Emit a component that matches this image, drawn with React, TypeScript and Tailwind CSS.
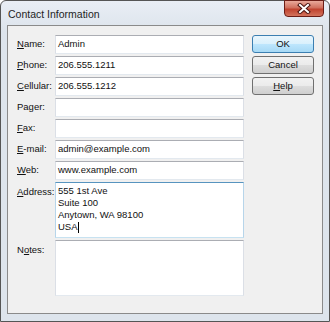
import React from 'react';

const font = { fontFamily: '"Liberation Sans", Arial, sans-serif' };

function Label({ pre = '', u = '', post = '' }: { pre?: string; u?: string; post?: string }) {
  return (
    <span>
      {pre}
      {u && <span className="underline underline-offset-[1px]">{u}</span>}
      {post}
    </span>
  );
}

const rows: { label: React.ReactNode; value: string }[] = [
  { label: <Label u="N" post="ame:" />, value: 'Admin' },
  { label: <Label u="P" post="hone:" />, value: '206.555.1211' },
  { label: <Label u="C" post="ellular:" />, value: '206.555.1212' },
  { label: <Label post="Pager:" />, value: '' },
  { label: <Label u="F" post="ax:" />, value: '' },
  { label: <Label u="E" post="-mail:" />, value: 'admin@example.com' },
  { label: <Label u="W" post="eb:" />, value: 'www.example.com' },
];

function Field({ value }: { value: string }) {
  return (
    <div className="h-[19px] flex-1 bg-white border border-t-[#abadb3] border-x-[#dbdfe6] border-b-[#e3e9ef] flex items-center pl-[2px]">
      {value}
    </div>
  );
}

function Button({ children, primary }: { children: React.ReactNode; primary?: boolean }) {
  return (
    <div
      className={`h-[18px] w-[62px] rounded-[3px] border flex items-center justify-center ${
        primary
          ? 'border-[#3c7fb1] bg-[linear-gradient(#eaf6fd_0%,#d9f0fc_50%,#bee6fd_50%,#a7d9f5_100%)]'
          : 'border-[#707070] bg-[linear-gradient(#f2f2f2_0%,#ebebeb_50%,#dddddd_50%,#cfcfcf_100%)]'
      }`}
    >
      {children}
    </div>
  );
}

export default function App() {
  return (
    <div
      className="w-[330px] h-[322px] rounded-t-[6px] border border-[#555] bg-[linear-gradient(#e9eef5,#dde4ec_30px,#dde4ec)] flex flex-col px-[6px] pb-[7px] text-[9.5px] text-[#111]"
      style={font}
    >
      <div className="h-[24px] flex items-start justify-between shrink-0">
        <span className="text-[10.5px] pl-[1px] mt-[6px] text-[#1e1e1e]">Contact Information</span>
        <div className="w-[40px] h-[17px] -mt-px mr-[-1px] rounded-b-[4px] border border-[#6b1d16] bg-[linear-gradient(#e9a99b,#d0705e_45%,#c0432f_55%,#d3735c)] flex items-center justify-center">
          <svg width="14" height="11" viewBox="0 0 14 11">
            <path d="M3 2 L11 9 M11 2 L3 9" stroke="#4a1410" strokeWidth="4" strokeLinecap="square" />
            <path d="M3 2 L11 9 M11 2 L3 9" stroke="#ffffff" strokeWidth="2" strokeLinecap="square" />
          </svg>
        </div>
      </div>
      <div className="flex-1 border border-[#8a8a8a] bg-[#f0f0f0] flex pt-[9px] pl-[9px] pr-[8px]">
        <div className="flex flex-col gap-[2px] w-[227px] shrink-0">
          {rows.map((r, i) => (
            <div key={i} className="flex items-center">
              <div className="w-[38px] shrink-0">{r.label}</div>
              <Field value={r.value} />
            </div>
          ))}
          <div className="flex items-start">
            <div className="w-[38px] shrink-0 pt-[3px]">
              <Label u="A" post="ddress:" />
            </div>
            <div className="h-[56px] flex-1 bg-white border border-t-[#5794bf] border-x-[#b7d5ea] border-b-[#c7e2f1] pl-[2px] pt-[2px] leading-[12px]">
              <div>555 1st Ave</div>
              <div>Suite 100</div>
              <div>Anytown, WA 98100</div>
              <div className="flex items-center">
                USA<span className="inline-block w-px h-[11px] bg-black" />
              </div>
            </div>
          </div>
          <div className="flex items-start">
            <div className="w-[38px] shrink-0 pt-[3px]">
              <Label pre="N" u="o" post="tes:" />
            </div>
            <div className="h-[56px] flex-1 bg-white border border-t-[#abadb3] border-x-[#dbdfe6] border-b-[#e3e9ef]" />
          </div>
        </div>
        <div className="flex flex-col gap-[3px] ml-[8px]">
          <Button primary>OK</Button>
          <Button>Cancel</Button>
          <Button>
            <Label u="H" post="elp" />
          </Button>
        </div>
      </div>
    </div>
  );
}
